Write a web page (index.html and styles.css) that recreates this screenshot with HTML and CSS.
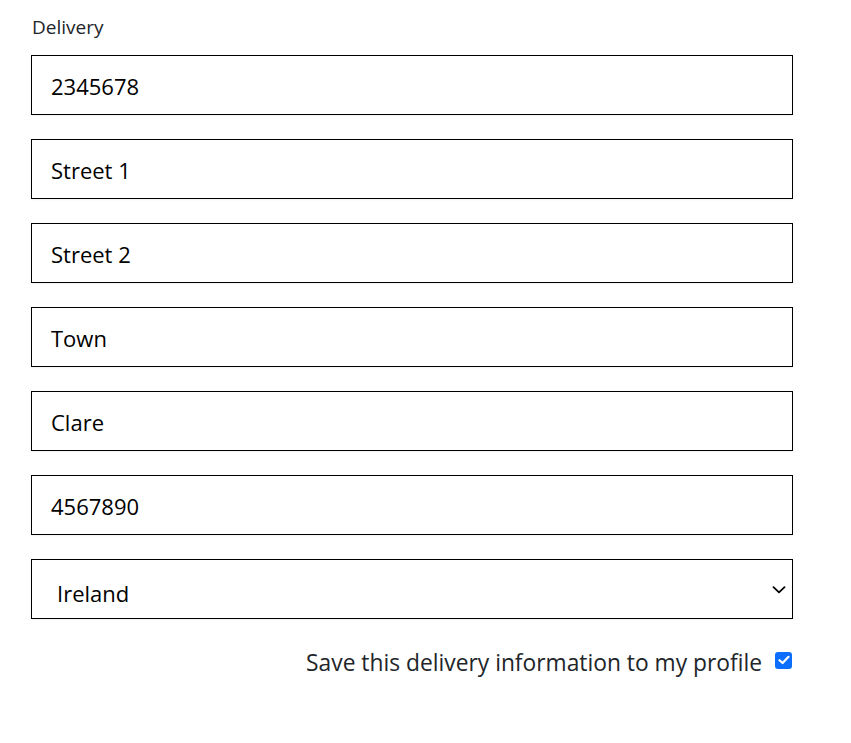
FILE: index.html
```html
<!DOCTYPE html>
<html lang="en">
<head>
<meta charset="utf-8">
<title>Delivery</title>
<link rel="stylesheet" href="styles.css">
</head>
<body>
<form class="delivery-form">
  <div class="section-label">Delivery</div>
  <div class="fields">
    <input class="field" type="text" value="2345678">
    <input class="field" type="text" value="Street 1">
    <input class="field" type="text" value="Street 2">
    <input class="field" type="text" value="Town">
    <input class="field" type="text" value="Clare">
    <input class="field" type="text" value="4567890">
    <div class="field select-field">
      <span class="select-value">Ireland</span>
      <svg class="chevron" width="14" height="8" viewBox="0 0 14 8"><path d="M1.5 1.2 L7 6.4 L12.5 1.2" fill="none" stroke="#000" stroke-width="1.8" stroke-linecap="round" stroke-linejoin="round"/></svg>
    </div>
  </div>
  <div class="save-row">
    <span class="save-text">Save this delivery information to my profile</span>
    <span class="check-box">
      <svg width="12" height="10" viewBox="0 0 12 10"><path d="M1.5 5.2 L4.6 8 L10.5 1.8" fill="none" stroke="#fff" stroke-width="2.2" stroke-linecap="round" stroke-linejoin="round"/></svg>
    </span>
  </div>
</form>
</body>
</html>
```

FILE: styles.css
```css
html, body {
  margin: 0;
  padding: 0;
  background: #ffffff;
}

.delivery-form {
  width: 762px;
  padding: 12px 0 0 31px;
  font-family: "Open Sans", "Noto Sans", sans-serif;
  color: #212529;
}

.section-label {
  font-size: 19px;
  line-height: 30px;
  padding-left: 1px;
  margin-bottom: 13px;
  color: #212529;
}

.fields {
  display: flex;
  flex-direction: column;
  gap: 24px;
}

.field {
  box-sizing: border-box;
  width: 762px;
  height: 60px;
  margin: 0;
  border: 1px solid #000;
  border-radius: 0;
  background: #fff;
  padding: 2px 19px 0 19px;
  font-family: "Open Sans", "Noto Sans", sans-serif;
  font-size: 22px;
  color: #000;
  box-shadow: 0 1px 2px rgba(0, 0, 0, 0.06);
  outline: none;
}

.select-field {
  display: flex;
  align-items: center;
  justify-content: space-between;
  padding: 8px 6px 0 25px;
}

.select-value {
  font-size: 22px;
  color: #000;
}

.chevron {
  display: block;
  margin-top: -7px;
}

.save-row {
  display: flex;
  justify-content: flex-end;
  align-items: center;
  gap: 13px;
  margin-top: 29px;
}

.save-text {
  font-size: 22.8px;
  line-height: 30px;
  color: #212529;
}

.check-box {
  width: 17px;
  height: 17px;
  border-radius: 3px;
  background: #0d6efd;
  display: flex;
  align-items: center;
  justify-content: center;
  margin-top: -6px;
  margin-right: 1px;
}
```
